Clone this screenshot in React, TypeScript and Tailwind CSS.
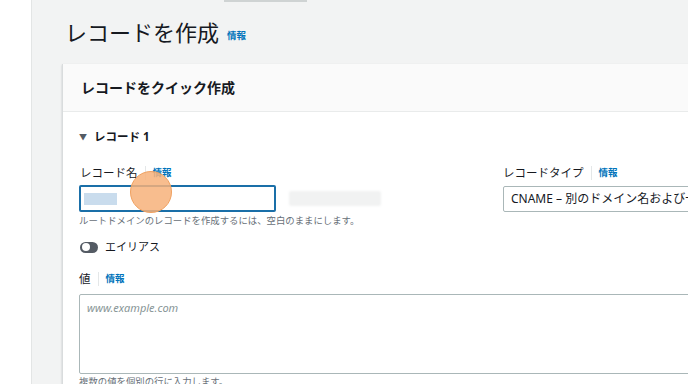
const font = "font-['Noto_Sans','Noto_Sans_CJK_JP',sans-serif]";

function InfoLabel({ label }: { label: string }) {
  return (
    <div className="flex h-[20px] items-center">
      <span className="text-[11.5px] leading-[20px] text-[#16191f]">{label}</span>
      <span className="mx-[7px] h-[14px] w-px bg-[#e4e7e8]" />
      <span className="text-[9.5px] font-bold leading-[20px] text-[#0073bb]">情報</span>
    </div>
  );
}

export default function App() {
  return (
    <div className={`${font} flex h-[384px] w-[688px] overflow-hidden bg-white`}>
      {/* left rail */}
      <div className="w-[32px] shrink-0 border-r border-[#e3e5e5] bg-white" />

      <div className="relative flex-1 bg-[#f2f3f3]">
        <div className="ml-[192px] h-[2px] w-[83px] bg-[#cfd3d3]" />

        <div className="ml-[33px] mt-[16px] flex h-[28px] items-end gap-[8px]">
          <h1 className="text-[22px] font-normal leading-[28px] text-[#16191f]">レコードを作成</h1>
          <span className="mb-[4px] text-[9.5px] font-bold leading-[12px] text-[#0073bb]">情報</span>
        </div>

        {/* card */}
        <div className="ml-[30px] mt-[18px] w-[700px] border-l border-[#d9dcdd] bg-white shadow-[0_1px_2px_rgba(0,28,36,0.2)]">
          <div className="flex h-[48px] items-center border-b border-[#e9ebeb] bg-[#fafafa] pl-[18px]">
            <h2 className="text-[14px] font-bold leading-[20px] text-[#16191f]">レコードをクイック作成</h2>
          </div>

          <div className="pl-[16px] pt-[15px]">
            <div className="flex h-[20px] items-center gap-[7px]">
              <span className="text-[8px] leading-[20px] text-[#545b64]">▼</span>
              <span className="text-[11.5px] font-bold leading-[20px] text-[#16191f]">レコード 1</span>
            </div>

            <div className="mt-[16px] flex">
              <div className="w-[424px] shrink-0">
                <div className="pl-[1px]">
                  <InfoLabel label="レコード名" />
                </div>
                <div className="mt-[2px] flex items-center">
                  <div className="flex h-[27px] w-[197px] items-center rounded-[2px] border-2 border-[#1a6fa8] pl-[3px]">
                    <div className="h-[12px] w-[33px] bg-[#c9dced] blur-[0.5px]" />
                  </div>
                  <div className="ml-[13px] h-[15px] w-[92px] rounded-[2px] bg-[#f1f2f2] blur-[1px]" />
                </div>
                <p className="mt-[1px] text-[9.4px] leading-[16px] text-[#687078]">
                  ルートドメインのレコードを作成するには、空白のままにします。
                </p>
                <div className="mt-[12px] flex h-[12px] items-center gap-[7px] pl-[1px]">
                  <div className="flex h-[11px] w-[18px] items-center rounded-full bg-[#545b64] pl-[1.5px]">
                    <div className="h-[8px] w-[8px] rounded-full bg-white" />
                  </div>
                  <span className="text-[11px] leading-[12px] text-[#16191f]">エイリアス</span>
                </div>
              </div>

              <div className="flex-1">
                <InfoLabel label="レコードタイプ" />
                <div className="mt-[3px] flex h-[26px] items-center rounded-[2px] border border-[#aab7b8] pl-[7px]">
                  <span className="whitespace-nowrap text-[12px] leading-[20px] text-[#16191f]">
                    CNAME – 別のドメイン名および一部のAWSリソースにトラフィックをルーティング
                  </span>
                </div>
              </div>
            </div>

            <div className="mt-[16px]">
              <InfoLabel label="値" />
              <div className="mt-[5px] h-[80px] rounded-[2px] border border-[#aab7b8] px-[7px] pt-[5px]">
                <span className="block text-[11px] italic leading-[16px] text-[#879596]">www.example.com</span>
              </div>
              <p className="mt-[1px] text-[9.4px] leading-[14px] text-[#687078]">複数の値を個別の行に入力します。</p>
            </div>
          </div>
        </div>

        {/* click highlight */}
        <div className="absolute left-[98px] top-[171px] h-[42px] w-[42px] rounded-full border border-[#f0a160] bg-[#f7b27a]/85" />
      </div>
    </div>
  );
}
